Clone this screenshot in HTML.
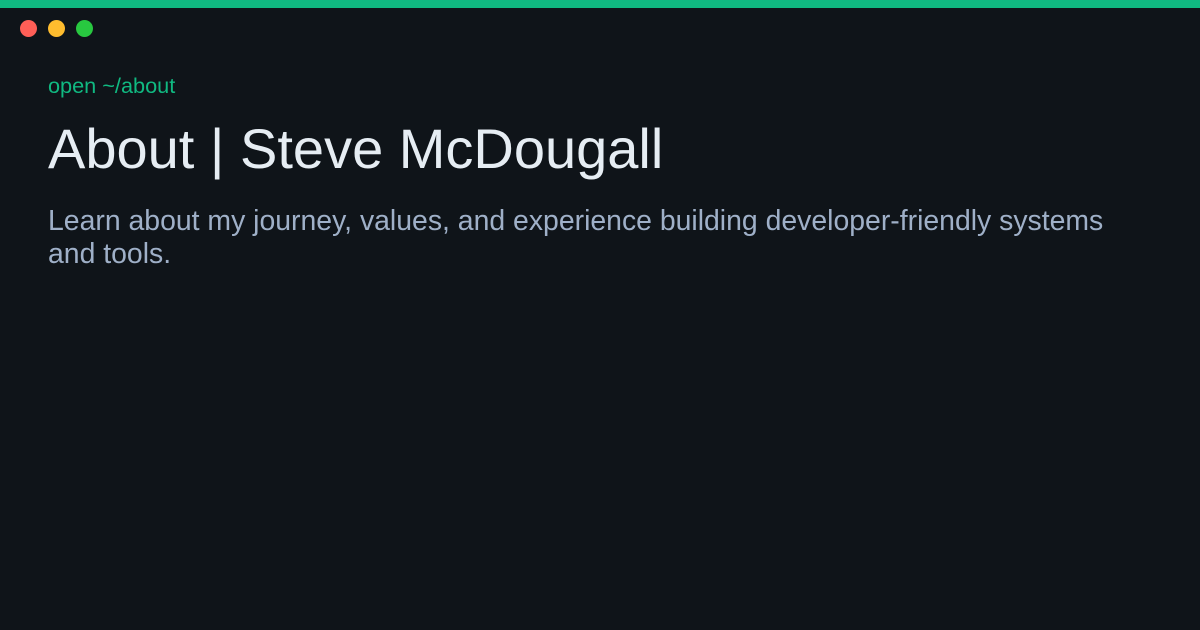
<!DOCTYPE html>
<html><head><style>
body{margin:0;width:1200px;height:630px;background:#0f1419;font-family:"Liberation Sans",sans-serif;position:relative;overflow:hidden}
.bar{position:absolute;top:0;left:0;width:1200px;height:8px;background:#10b981}
.d{position:absolute;top:20px;width:17px;height:17px;border-radius:50%}
.t{position:absolute;left:48px;white-space:nowrap}
</style></head><body>
<div class="bar"></div>
<div class="d" style="left:20px;background:#ff5f57"></div>
<div class="d" style="left:48px;background:#febc2e"></div>
<div class="d" style="left:76px;background:#28c840"></div>
<div class="t" style="top:73px;font-size:21.7px;color:#10b981">open ~/about</div>
<div class="t" style="top:116px;font-size:56px;color:#e6edf3">About | Steve McDougall</div>
<div class="t" style="top:205px;font-size:28.4px;line-height:33px;color:#9fb0c8;white-space:normal;width:1080px">Learn about my journey, values, and experience building developer-friendly systems and tools.</div>
</body></html>
